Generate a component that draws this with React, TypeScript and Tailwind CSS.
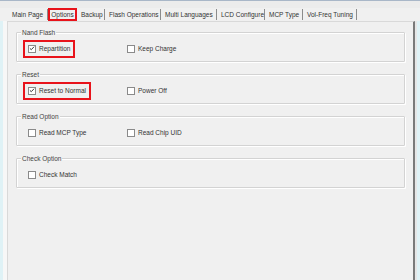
import React from "react";

const tabs = [
  { label: "Main Page", w: "w-[40px]" },
  { label: "Options", w: "w-[29px]", active: true },
  { label: "Backup", w: "w-[28px]" },
  { label: "Flash Operations", w: "w-[56px]" },
  { label: "Multi Languages", w: "w-[56px]" },
  { label: "LCD Configure", w: "w-[48px]" },
  { label: "MCP Type", w: "w-[38px]" },
  { label: "Vol-Freq Tuning", w: "w-[54px]" },
];

function Check({ checked, label }: { checked?: boolean; label: string }) {
  return (
    <span className="flex items-center gap-[3px]">
      <span className="flex size-[8px] items-center justify-center border border-[#8a8a8a] bg-white">
        {checked && (
          <svg viewBox="0 0 8 8" className="size-[7px]">
            <path d="M1.2 3.8 L3 5.6 L6.8 1.6" fill="none" stroke="#333" strokeWidth="1.3" />
          </svg>
        )}
      </span>
      <span>{label}</span>
    </span>
  );
}

// Etched group box with caption sitting on the top edge
function Group({
  title,
  left,
  right,
  leftBoxed,
}: {
  title: string;
  left: React.ReactNode;
  right?: React.ReactNode;
  leftBoxed?: string;
}) {
  return (
    <div className="relative h-[30px] rounded-[1px] border border-[#d3d3d3] shadow-[inset_1px_1px_0_#fff,1px_1px_0_#fff]">
      <span className="absolute -top-[5px] left-[4px] bg-[#f0f0f0] px-[1px] leading-[9px] text-[#444]">
        {title}
      </span>
      <div className="flex items-center pt-[7px] text-[#333]">
        <div className="ml-[6px] w-[104px]">
          <div className={`inline-flex items-center px-[3px] py-[2px] ${leftBoxed ?? "border-2 border-transparent"}`}>
            {left}
          </div>
        </div>
        {right && <div>{right}</div>}
      </div>
    </div>
  );
}

export default function App() {
  return (
    <div
      className="flex h-[280px] w-[420px] flex-col overflow-hidden bg-[#f0f0f0] text-[6.5px] text-[#333]"
      style={{ fontFamily: "'Liberation Sans', Arial, sans-serif" }}
    >
      <div className="h-[8px] border-t border-[#a9b7c8] bg-[#ececec]" />
      <div className="flex h-[13px] items-stretch pl-[8px]">
        {tabs.map((t) => (
          <div
            key={t.label}
            className={`flex shrink-0 items-center ${t.w} ${
              t.active
                ? "justify-center border-2 border-[#e8131b]"
                : "my-[1px] border-r border-[#8c8c8c] pl-[4px]"
            }`}
          >
            {t.label}
          </div>
        ))}
      </div>
      <div className="flex flex-1">
        <div className="w-[3px] bg-[#dff2f6]" />
        <div className="w-[4px] bg-[#f7f7f7]" />
        <div className="flex flex-1 flex-col border-t border-l border-r-2 border-[#d9d9d9] border-r-[#7a7a7a] px-[8px] pt-[10px]">
          <div className="flex flex-col gap-[12px]">
            <Group
              title="Nand Flash"
              left={<Check checked label="Repartition" />}
              right={<Check label="Keep Charge" />}
              leftBoxed="border-2 border-[#e8131b]"
            />
            <Group
              title="Reset"
              left={<Check checked label="Reset to Normal" />}
              right={<Check label="Power Off" />}
              leftBoxed="border-2 border-[#e8131b]"
            />
            <Group
              title="Read Option"
              left={<Check label="Read MCP Type" />}
              right={<Check label="Read Chip UID" />}
            />
            <Group title="Check Option" left={<Check label="Check Match" />} />
          </div>
        </div>
        <div className="w-[2px] bg-[#e6e6e6]" />
        <div className="w-[3px] bg-[#dff2f6]" />
      </div>
    </div>
  );
}
